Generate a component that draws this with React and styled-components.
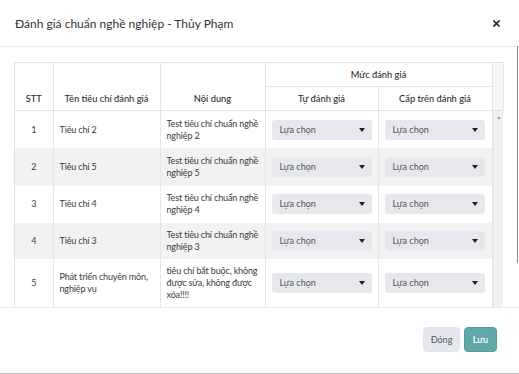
import React from "react";
import styled, { createGlobalStyle } from "styled-components";

const Global = createGlobalStyle`
  html, body { margin: 0; padding: 0; }
  body {
    background: #c2c2c2;
    font-family: Lato, "Open Sans", sans-serif;
    color: #333;
    -webkit-font-smoothing: antialiased;
  }
  * { box-sizing: border-box; }
`;

const Modal = styled.div`
  position: relative;
  width: 519px;
  height: 373px;
  background: #fff;
  display: flex;
  flex-direction: column;
`;

const Header = styled.div`
  height: 47px;
  flex: none;
  border-bottom: 1px solid #e9ecef;
  display: flex;
  align-items: center;
  justify-content: space-between;
  padding: 0 19px 0 15px;
`;

const Title = styled.div`
  font-size: 12px;
  color: #333;
`;

const Close = styled.button`
  border: 0;
  background: none;
  padding: 0;
  width: 8px;
  height: 8px;
  display: flex;
  align-items: center;
  justify-content: center;
`;

const Body = styled.div`
  flex: 1;
  overflow: hidden;
  padding: 15px 16px 0 14px;
`;

const ScrollThumb = styled.div`
  position: absolute;
  left: 517px;
  top: 46px;
  width: 1px;
  height: 217px;
  background: #8a8a8a;
`;

const TableBox = styled.div`
  width: 489px;
  border-left: 1px solid #e3e3e3;
`;

const Table = styled.table`
  border-collapse: collapse;
  table-layout: fixed;
  width: ${(p) => p.$w}px;
  font-size: 9px;
`;

const Th = styled.th`
  font-weight: 500;
  font-size: 9.3px;
  color: #2e2e2e;
  text-align: center;
  vertical-align: ${(p) => (p.$mid ? "middle" : "bottom")};
  border: 1px solid #e3e3e3;
  border-left: ${(p) => (p.$first ? "0" : "1px solid #e3e3e3")};
  height: ${(p) => p.$h || 24}px;
  padding: 0 4px ${(p) => (p.$mid ? 0 : 6)}px;
  background: ${(p) => (p.$gutter ? "#f7f7f7" : "#fff")};
`;

const ScrollArea = styled.div`
  display: flex;
  height: 196px;
  overflow: hidden;
`;

const Tr = styled.tr`
  background: ${(p) => (p.$striped ? "#f2f2f2" : "#fff")};
`;

const Td = styled.td`
  height: ${(p) => p.$h}px;
  border-right: 1px solid #e6e6e6;
  padding: 0 6px;
  vertical-align: middle;
  text-align: ${(p) => (p.$center ? "center" : "left")};
  color: #3a3a3a;
  line-height: 12px;
  letter-spacing: -0.15px;
`;

const Select = styled.div`
  width: 100px;
  height: 20px;
  border-radius: 3px;
  background: #e6e8ee;
  display: flex;
  align-items: center;
  justify-content: space-between;
  padding: 0 7px 0 8px;
  color: #555;
  font-size: 9px;
  letter-spacing: 0;
`;

const Caret = styled.span`
  width: 0;
  height: 0;
  border-left: 3px solid transparent;
  border-right: 3px solid transparent;
  border-top: 4px solid #222;
`;

const Gutter = styled.div`
  width: 11px;
  flex: none;
  background: #f1f1f1;
  border-left: 1px solid #e8e8e8;
  display: flex;
  justify-content: center;
  padding-top: 5px;
`;

const UpArrow = styled.span`
  width: 0;
  height: 0;
  border-left: 2.5px solid transparent;
  border-right: 2.5px solid transparent;
  border-bottom: 3px solid #a3a3a3;
`;

const Footer = styled.div`
  height: 66px;
  flex: none;
  border-top: 1px solid #e9ecef;
  display: flex;
  align-items: center;
  justify-content: flex-end;
  gap: 4px;
  padding: 0 22px 2px 0;
`;

const Button = styled.button`
  height: 25px;
  width: ${(p) => (p.$primary ? 33 : 37)}px;
  padding: 0;
  border-radius: 4px;
  font-family: inherit;
  font-size: 9px;
  border: 1px solid ${(p) => (p.$primary ? "#4f9c9b" : "#e3e5ee")};
  background: ${(p) => (p.$primary ? "#5fa8a7" : "#e5e7ef")};
  color: ${(p) => (p.$primary ? "#fff" : "#555")};
  font-weight: ${(p) => (p.$primary ? 600 : 400)};
`;

const rows = [
  { stt: 1, name: "Tiêu chí 2", content: "Test tiêu chí chuẩn nghề nghiệp 2", h: 37 },
  { stt: 2, name: "Tiêu chí 5", content: "Test tiêu chí chuẩn nghề nghiệp 5", h: 37 },
  { stt: 3, name: "Tiêu chí 4", content: "Test tiêu chí chuẩn nghề nghiệp 4", h: 37 },
  { stt: 4, name: "Tiêu chí 3", content: "Test tiêu chí chuẩn nghề nghiệp 3", h: 36 },
  { stt: 5, name: "Phát triển chuyên môn, nghiệp vụ", content: "tiêu chí bắt buộc, không được sửa, không được xóa!!!!", h: 47 },
];

const Cols = ({ gutter }) => (
  <colgroup>
    <col style={{ width: 38 }} />
    <col style={{ width: 107 }} />
    <col style={{ width: 105 }} />
    <col style={{ width: 113 }} />
    <col style={{ width: 114 }} />
    {gutter && <col style={{ width: 11 }} />}
  </colgroup>
);

export default function App() {
  return (
    <>
      <Global />
      <Modal>
        <Header>
          <Title>Đánh giá chuẩn nghề nghiệp - Thủy Phạm</Title>
          <Close aria-label="close">
            <svg width="7" height="7" viewBox="0 0 7 7">
              <path d="M1 1L6 6M6 1L1 6" stroke="#222" strokeWidth="1.6" strokeLinecap="square" />
            </svg>
          </Close>
        </Header>
        <Body>
          <TableBox>
            <Table $w={488}>
              <Cols gutter />
              <thead>
                <tr>
                  <Th rowSpan={2} $first $h={48}>STT</Th>
                  <Th rowSpan={2}>Tên tiêu chí đánh giá</Th>
                  <Th rowSpan={2}>Nội dung</Th>
                  <Th colSpan={2} $h={24} $mid>Mức đánh giá</Th>
                  <Th rowSpan={2} $gutter />
                </tr>
                <tr>
                  <Th $h={24} $mid>Tự đánh giá</Th>
                  <Th $h={24} $mid>Cấp trên đánh giá</Th>
                </tr>
              </thead>
            </Table>
            <ScrollArea>
              <Table $w={477}>
                <Cols />
                <tbody>
                  {rows.map((r, i) => (
                    <Tr key={r.stt} $striped={i % 2 === 1}>
                      <Td $h={r.h} $center>{r.stt}</Td>
                      <Td $h={r.h}>{r.name}</Td>
                      <Td $h={r.h}>{r.content}</Td>
                      <Td $h={r.h}>
                        <Select>Lựa chọn<Caret /></Select>
                      </Td>
                      <Td $h={r.h}>
                        <Select>Lựa chọn<Caret /></Select>
                      </Td>
                    </Tr>
                  ))}
                </tbody>
              </Table>
              <Gutter>
                <UpArrow />
              </Gutter>
            </ScrollArea>
          </TableBox>
        </Body>
        <Footer>
          <Button>Đóng</Button>
          <Button $primary>Lưu</Button>
        </Footer>
        <ScrollThumb />
      </Modal>
    </>
  );
}
